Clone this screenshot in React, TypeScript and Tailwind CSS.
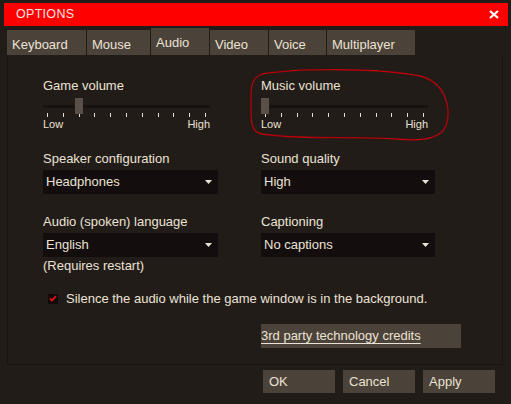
import React from 'react';

const tabs = ['Keyboard', 'Mouse', 'Audio', 'Video', 'Voice', 'Multiplayer'];
const tabWidths = ['w-[79px]', 'w-[63px]', 'w-[58px]', 'w-[58px]', 'w-[57px]', 'w-[88px]'];

const Slider: React.FC<{ label: string; thumb: string }> = ({ label, thumb }) => (
  <div className="w-[167px]">
    <div className="h-[15px] leading-[15px]">{label}</div>
    <div className="relative mt-[5px] h-[16px]">
      <div className="absolute left-0 right-0 top-[7px] h-[3px] bg-[#171210]" />
      <div className={`absolute top-0 h-[16px] w-[8px] bg-[#5a5047] ${thumb}`} />
    </div>
    <div className="-mt-px flex h-[4px] justify-between px-[4px]">
      {Array.from({ length: 11 }).map((_, i) => (
        <div key={i} className="h-[4px] w-px bg-[#e6ddd0]" />
      ))}
    </div>
    <div className="mt-[2px] flex justify-between text-[11px] leading-[11px]">
      <span>Low</span>
      <span>High</span>
    </div>
  </div>
);

const Select: React.FC<{ value: string }> = ({ value }) => (
  <div className="mt-[4px] flex h-[24px] items-center justify-between bg-[#130e0d] pl-[3px] pr-[6px]">
    <span>{value}</span>
    <svg width="7" height="4" viewBox="0 0 7 4">
      <path d="M0 0 H7 L3.5 4 Z" fill="#ece3d6" />
    </svg>
  </div>
);

const App: React.FC = () => {
  return (
    <div className="relative h-[404px] w-[511px] overflow-hidden bg-[#221c19] font-['Liberation_Sans',Arial,sans-serif] text-[13px] text-[#ebe2d5]">
      {/* title */}
      <div className="px-[4px] pt-[3px]">
        <div className="flex h-[23px] w-[504px] items-center justify-between bg-[#ff0000] pl-[12px] pr-[9px]">
          <span className="text-[12.5px] tracking-[0.3px] text-[#f4e6e0]">OPTIONS</span>
          <svg width="10" height="9" viewBox="0 0 10 9">
            <path d="M1 1 L9 8 M9 1 L1 8" stroke="#ffffff" strokeWidth="2.2" />
          </svg>
        </div>
      </div>

      {/* tabs */}
      <div className="mt-[2px] flex h-[27px] items-end gap-[1px] pl-[7px]">
        {tabs.map((t, i) => (
          <div
            key={t}
            className={`${tabWidths[i]} bg-[#4b4239] pl-[5px] ${
              t === 'Audio' ? 'h-[27px] pt-[5px]' : 'h-[25px] pt-[5px]'
            }`}
          >
            {t}
          </div>
        ))}
      </div>

      {/* panel */}
      <div className="mx-[7px] h-[310px] w-[496px] border-x border-b border-[#181311] pl-[35px] pt-[23px]">
        <div className="grid grid-cols-[175px_174px] gap-x-[43px]">
          <Slider label="Game volume" thumb="left-[32px]" />
          <Slider label="Music volume" thumb="left-0" />

          <div className="mt-[21px]">
            <div className="h-[15px] leading-[15px]">Speaker configuration</div>
            <Select value="Headphones" />
          </div>
          <div className="mt-[21px]">
            <div className="h-[15px] leading-[15px]">Sound quality</div>
            <Select value="High" />
          </div>

          <div className="mt-[20px]">
            <div className="h-[15px] leading-[15px]">Audio (spoken) language</div>
            <Select value="English" />
            <div className="mt-[1px] h-[15px] leading-[15px]">(Requires restart)</div>
          </div>
          <div className="mt-[20px]">
            <div className="h-[15px] leading-[15px]">Captioning</div>
            <Select value="No captions" />
          </div>
        </div>

        <div className="mt-[18px] flex h-[15px] items-center gap-[8px] pl-[5px]">
          <div className="flex h-[10px] w-[10px] items-center justify-center bg-[#100b0a]">
            <svg width="8" height="7" viewBox="0 0 8 7">
              <path d="M1 3.5 L3 5.5 L7 1" stroke="#e8141a" strokeWidth="1.8" fill="none" />
            </svg>
          </div>
          <span className="leading-[15px]">Silence the audio while the game window is in the background.</span>
        </div>

        <div className="mt-[18px] pl-[218px]">
          <div className="flex h-[24px] w-[200px] items-center bg-[#4b4239]">
            <span className="underline underline-offset-[3px]">3rd party technology credits</span>
          </div>
        </div>
      </div>

      {/* buttons */}
      <div className="mt-[5px] flex justify-end gap-[8px] pr-[16px]">
        {['OK', 'Cancel', 'Apply'].map((b) => (
          <div key={b} className="flex h-[23px] w-[72px] items-center bg-[#4b4239] pl-[6px]">
            {b}
          </div>
        ))}
      </div>

      {/* hand drawn annotation */}
      <svg className="pointer-events-none absolute left-0 top-0" width="511" height="404">
        <path
          d="M262 74 C300 68, 380 68, 420 76 C445 82, 452 108, 446 126 C440 140, 420 141, 395 139 C350 136, 300 140, 262 134 C250 132, 251 120, 251 100 C251 85, 252 78, 262 74 Z"
          stroke="#b3000b"
          strokeWidth="1.3"
          fill="none"
        />
      </svg>
    </div>
  );
};

export default App;
